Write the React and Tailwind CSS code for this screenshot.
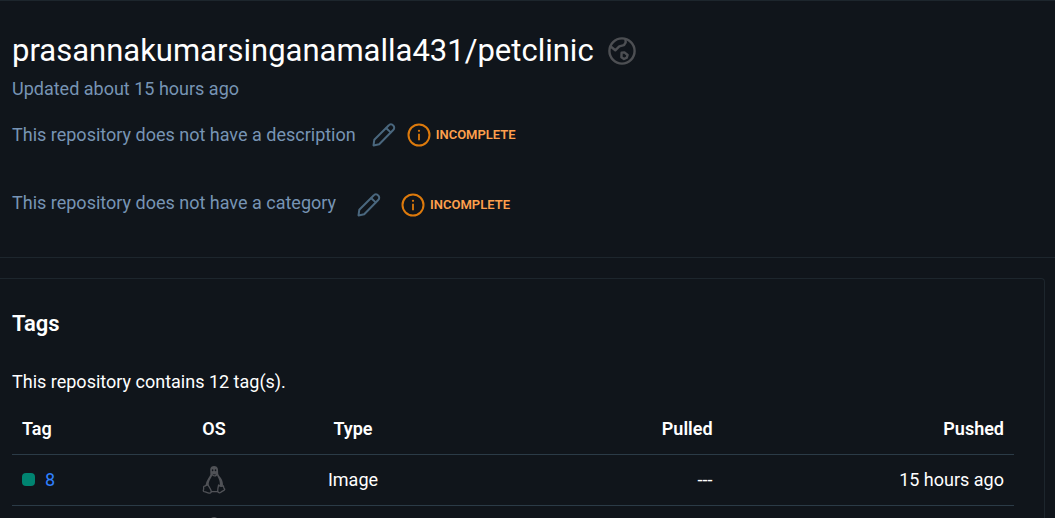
function GlobeIcon() {
  return (
    <svg viewBox="0 0 28 28" className="size-7 shrink-0 text-[#4d4f53]" fill="none" stroke="currentColor" strokeWidth="2.4" strokeLinejoin="round" role="img" aria-label="Public">
      <circle cx="14" cy="14" r="12.6" />
      <path d="M2.4 9.300 7.300 13.300l4-4 4.700-1.100 1.700-2.900-.3-3.500" />
      <path d="M13.600 15.800l2.800-.4 3.200 2.600-.8 2.600-2.800 1.400-2.600-1.800z" />
    </svg>
  );
}

function PencilIcon() {
  return (
    <svg viewBox="0 0 24 24" className="size-6" fill="none" stroke="currentColor" strokeWidth="2" strokeLinejoin="round" strokeLinecap="round" aria-hidden="true">
      <path d="M1.500 22.400l.8-5.600L16.600 2.500a2.900 2.900 0 0 1 4.600 0 3 3 0 0 1 0 4.500L7.200 21.300z" />
      <path d="M14.300 5.200l4.400 4.200" />
    </svg>
  );
}

function InfoIcon() {
  return (
    <svg viewBox="0 0 24 24" className="size-6 shrink-0 text-[#dd7a0c]" fill="none" aria-hidden="true">
      <circle cx="12" cy="12" r="10.5" stroke="currentColor" strokeWidth="2" />
      <path d="M12 10.8v6.4" stroke="currentColor" strokeWidth="1.8" />
      <circle cx="12" cy="7.8" r="1.1" fill="currentColor" />
    </svg>
  );
}

function TuxIcon() {
  return (
    <svg viewBox="0 0 24 30" className="inline-block h-[30px] w-6" fill="none" stroke="currentColor" strokeWidth="1.3" strokeLinejoin="round" strokeLinecap="round" role="img" aria-label="Linux">
      <path fill="currentColor" fillRule="evenodd" stroke="none" d="M8.200 4.500C8.300-.1 15.800-.1 16 4.500l.2 4.300c.6 2.400 4.600 5 4.800 10.400l-.3 2.400-3-.6c.6-3.600-.6-6.600-1.900-9l-.7-1.600c-1.400 1.500-3.400 1.600-4.800.2l-1.100 1.800c-1.500 2.600-2.700 4.800-2.600 7.800l-2.900.8c0-4.600 3-7.600 4.700-11.400zM9.800 5.300a.8 1 0 1 0 1.600 0 .8 1 0 1 0-1.600 0zM12.700 5.300a.8 1 0 1 0 1.600 0 .8 1 0 1 0-1.600 0zM10.300 8.800l2 .8 2-.8-2 1.600z" />
      <path d="M5.200 19.500c-.8.500-1.100 1.500-3.200 1.800-.9.600-.1 2-.4 3-.5 1.500-.5 2 .6 2.300 1.900.4 3.300 1.300 4.800 1.500 1.300.1 2.300-.6 2.300-1.700-.2-2-2.400-4.800-3.300-6.500z" />
      <path d="M16.600 20c-.5 2-.9 4-.9 6.200.2 1.500 1.900 2.100 3.100 1.100 1.100-1 2.500-1.500 3.500-2.200.8-.7.400-1.200-.300-1.900-.5-.7-.1-1.700-.9-2.500-.9.800-3.200 1-4.500-.7zM9.300 26.600h6.400" />
    </svg>
  );
}

function MissingField({ text, label, className, iconGap }) {
  return (
    <div className={className}>
      <span>{text}</span>
      <div className={iconGap}>
        <button type="button" aria-label={label} className="flex text-[#4a677e]">
          <PencilIcon />
        </button>
        <span className="flex items-center gap-[5px] text-[13px] leading-6 font-semibold text-[#ffa04d]">
          <InfoIcon />
          INCOMPLETE
        </span>
      </div>
    </div>
  );
}

const tags = [
  { name: "8", type: "Image", pulled: "---", pushed: "15 hours ago" },
  { name: "7", type: "Image", pulled: "---", pushed: "15 hours ago" },
];

export default function App() {
  return (
    <div className="min-h-screen border-t border-[#1d262d] bg-[#10151b] font-['Roboto',sans-serif] text-lg text-white">
      <header className="border-b border-[#1d262d] px-3 pt-7 pb-10 text-[#7794b4]">
        <div className="flex items-center gap-3.5">
          <h1 className="text-[31px] leading-11 text-white">prasannakumarsinganamalla431/petclinic</h1>
          <GlobeIcon />
        </div>
        <p className="mt-0.5">Updated about 15 hours ago</p>
        <MissingField
          text="This repository does not have a description"
          label="Edit description"
          className="mt-[18px] flex items-center gap-4"
          iconGap="flex items-center gap-[11px]"
        />
        <MissingField
          text="This repository does not have a category"
          label="Edit category"
          className="mt-10 flex items-center gap-[21px]"
          iconGap="flex items-center gap-5 pt-1"
        />
      </header>

      <main className="mt-5 mr-2.5 rounded-tr border-t border-r border-[#1d262d] pt-[29px] pr-[30px] pl-3">
        <h2 className="text-[22px] leading-8 font-semibold">Tags</h2>
        <p className="mt-7">This repository contains 12 tag(s).</p>
        <table className="mt-2 w-full table-fixed border-collapse">
          <colgroup>
            <col className="w-[152px]" />
            <col className="w-[100px]" />
            <col className="w-[178px]" />
            <col className="w-[28%]" />
            <col />
          </colgroup>
          <thead>
            <tr className="h-[50px] border-b border-[#2b3b47]">
              <th scope="col" className="px-2.5 text-left font-semibold">Tag</th>
              <th scope="col" className="px-2.5 text-center font-semibold">OS</th>
              <th scope="col" className="px-2.5 text-center font-semibold">Type</th>
              <th scope="col" className="px-2.5 text-right font-semibold">Pulled</th>
              <th scope="col" className="px-2.5 text-right font-semibold">Pushed</th>
            </tr>
          </thead>
          <tbody>
            {tags.map((tag) => (
              <tr key={tag.name} className="h-[51px] border-b border-[#2b3b47]">
                <td className="px-2.5">
                  <div className="flex items-center gap-2.5">
                    <span className="size-[13px] rounded bg-[#008471]" />
                    <a href="#tag" className="text-[#2f80ff]">{tag.name}</a>
                  </div>
                </td>
                <td className="px-2.5 text-center leading-none text-[#505257]"><TuxIcon /></td>
                <td className="px-2.5 text-center">{tag.type}</td>
                <td className="px-2.5 text-right">{tag.pulled}</td>
                <td className="px-2.5 text-right">{tag.pushed}</td>
              </tr>
            ))}
          </tbody>
        </table>
      </main>
    </div>
  );
}
